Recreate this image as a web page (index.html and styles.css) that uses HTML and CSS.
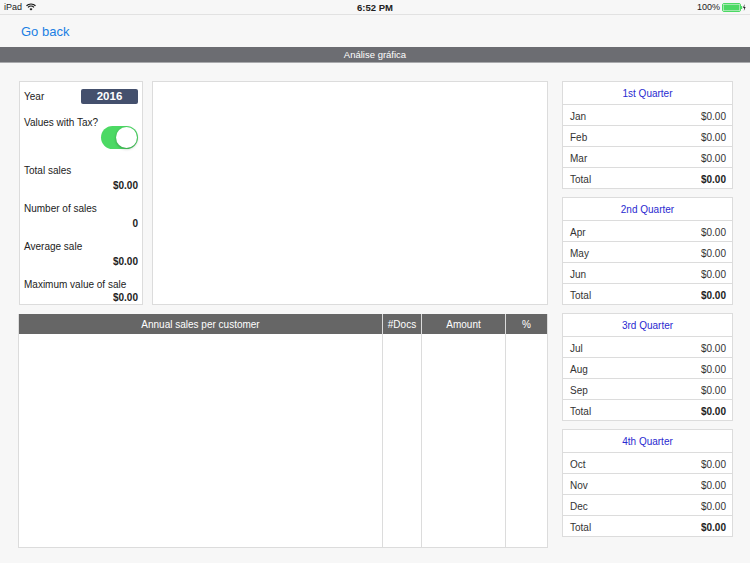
FILE: index.html
```html
<!DOCTYPE html>
<html lang="pt">
<head>
    <meta charset="UTF-8">
    <meta name="viewport" content="width=device-width, initial-scale=1.0">
    <title>Análise gráfica</title>
    <link rel="stylesheet" href="styles.css">
</head>
<body>
    <div class="statusbar">
        <div class="sb-left">
            <span>iPad</span>
            <svg class="wifi" width="10" height="8" viewBox="0 0 10 8">
                <path d="M0.5 2.8 A6.5 6.5 0 0 1 9.5 2.8" fill="none" stroke="#111" stroke-width="1.2"/>
                <path d="M2 4.4 A4.3 4.3 0 0 1 8 4.4" fill="none" stroke="#111" stroke-width="1.2"/>
                <path d="M3.5 6 A2.2 2.2 0 0 1 6.5 6 L5 7.6 Z" fill="#111"/>
            </svg>
        </div>
        <div class="sb-time">6:52 PM</div>
        <div class="sb-right">
            <span>100%</span>
            <svg width="24" height="9" viewBox="0 0 24 9">
                <rect x="0.5" y="0.5" width="18" height="8" rx="1.5" fill="none" stroke="#4cd964"/>
                <rect x="1.5" y="1.5" width="16" height="6" rx="0.8" fill="#4cd964"/>
                <rect x="19" y="3" width="1.2" height="3" fill="#4cd964"/>
                <path d="M22.6 1 L21 4.8 L22.3 4.8 L21.8 8 L23.6 3.9 L22.3 3.9 Z" fill="#111"/>
            </svg>
        </div>
    </div>

    <div class="navbar">
        <a class="back">Go back</a>
    </div>
    <div class="titlebar">Análise gráfica</div>

    <main class="content">
        <div class="left-col">
            <div class="top-row">
                <div class="stats">
                    <div class="year-row">
                        <span>Year</span>
                        <span class="year">2016</span>
                    </div>
                    <div class="label">Values with Tax?</div>
                    <div class="toggle-row">
                        <div class="toggle"><div class="knob"></div></div>
                    </div>
                    <div class="label">Total sales</div>
                    <div class="value">$0.00</div>
                    <div class="label">Number of sales</div>
                    <div class="value">0</div>
                    <div class="label">Average sale</div>
                    <div class="value">$0.00</div>
                    <div class="label">Maximum value of sale</div>
                    <div class="value last">$0.00</div>
                </div>
                <div class="chart"></div>
            </div>

            <div class="sales-table">
                <div class="thead">
                    <div class="c-name">Annual sales per customer</div>
                    <div class="c-docs">#Docs</div>
                    <div class="c-amount">Amount</div>
                    <div class="c-pct">%</div>
                </div>
                <div class="tbody">
                    <div class="c-name"></div>
                    <div class="c-docs"></div>
                    <div class="c-amount"></div>
                    <div class="c-pct"></div>
                </div>
            </div>
        </div>

        <div class="right-col">
            <div class="quarter">
                <div class="q-title">1st Quarter</div>
                <div class="q-row"><span>Jan</span><span>$0.00</span></div>
                <div class="q-row"><span>Feb</span><span>$0.00</span></div>
                <div class="q-row"><span>Mar</span><span>$0.00</span></div>
                <div class="q-row total"><span>Total</span><b>$0.00</b></div>
            </div>
            <div class="quarter">
                <div class="q-title">2nd Quarter</div>
                <div class="q-row"><span>Apr</span><span>$0.00</span></div>
                <div class="q-row"><span>May</span><span>$0.00</span></div>
                <div class="q-row"><span>Jun</span><span>$0.00</span></div>
                <div class="q-row total"><span>Total</span><b>$0.00</b></div>
            </div>
            <div class="quarter">
                <div class="q-title">3rd Quarter</div>
                <div class="q-row"><span>Jul</span><span>$0.00</span></div>
                <div class="q-row"><span>Aug</span><span>$0.00</span></div>
                <div class="q-row"><span>Sep</span><span>$0.00</span></div>
                <div class="q-row total"><span>Total</span><b>$0.00</b></div>
            </div>
            <div class="quarter">
                <div class="q-title">4th Quarter</div>
                <div class="q-row"><span>Oct</span><span>$0.00</span></div>
                <div class="q-row"><span>Nov</span><span>$0.00</span></div>
                <div class="q-row"><span>Dec</span><span>$0.00</span></div>
                <div class="q-row total"><span>Total</span><b>$0.00</b></div>
            </div>
        </div>
    </main>
</body>
</html>
```

FILE: styles.css
```css
* {
    margin: 0;
    padding: 0;
    box-sizing: border-box;
}
body {
    width: 750px;
    height: 563px;
    overflow: hidden;
    background-color: #f7f7f7;
    font-family: "Liberation Sans", Arial, sans-serif;
    color: #222;
}

/* status bar */
.statusbar {
    height: 15px;
    display: flex;
    align-items: center;
    justify-content: space-between;
    padding: 0 4px;
    font-size: 9px;
    border-bottom: 1px solid #e2e2e2;
}
.sb-left,
.sb-right {
    width: 120px;
    display: flex;
    align-items: center;
    gap: 4px;
}
.sb-right {
    justify-content: flex-end;
    gap: 2px;
}
.sb-time {
    font-weight: bold;
    font-size: 9.5px;
}

/* nav */
.navbar {
    height: 32px;
    display: flex;
    align-items: center;
    padding-left: 21px;
}
.back {
    color: #1b7fe3;
    font-size: 13px;
}
.titlebar {
    height: 16px;
    background-color: #6c6d72;
    border-bottom: 1px solid #a9aaad;
    color: #fff;
    font-size: 9.5px;
    text-align: center;
    line-height: 15px;
}

/* main layout */
.content {
    display: flex;
    padding: 18px 0 0 18px;
    gap: 14px;
}
.left-col {
    width: 530px;
}
.top-row {
    display: flex;
    gap: 9px;
    height: 224px;
    padding-left: 1px;
}
.stats {
    width: 124px;
    background: #fff;
    border: 1px solid #dcdcdc;
    padding: 0 4px;
    font-size: 10px;
}
.year-row {
    display: flex;
    justify-content: space-between;
    align-items: center;
    height: 33px;
    padding-bottom: 4px;
}
.year {
    width: 57px;
    height: 15px;
    background-color: #44506d;
    color: #fff;
    font-weight: bold;
    font-size: 11.5px;
    text-align: center;
    line-height: 15px;
    border-radius: 2px;
}
.label {
    line-height: 12px;
    margin-top: 2px;
}
.toggle-row {
    display: flex;
    justify-content: flex-end;
    height: 37px;
    margin-top: -3px;
}
.toggle {
    width: 37px;
    height: 23px;
    border-radius: 12px;
    background-color: #4cd964;
    position: relative;
}
.knob {
    position: absolute;
    right: 1px;
    top: 1px;
    width: 21px;
    height: 21px;
    border-radius: 50%;
    background: #fff;
    box-shadow: 0 1px 3px rgba(0, 0, 0, 0.3);
}
.value {
    text-align: right;
    font-weight: bold;
    line-height: 12px;
    margin-top: 3px;
    height: 21px;
}
.value.last {
    height: auto;
    margin-top: 1px;
}
.chart {
    flex: 1;
    background: #fff;
    border: 1px solid #dcdcdc;
}

/* table */
.sales-table {
    margin-top: 9px;
    height: 234px;
    border: 1px solid #dcdcdc;
    border-top: none;
    background: #fff;
    display: flex;
    flex-direction: column;
}
.thead,
.tbody {
    display: flex;
}
.thead {
    height: 20px;
    background-color: #666;
    color: #fff;
    font-size: 10px;
    line-height: 22px;
    text-align: center;
}
.tbody {
    flex: 1;
}
.c-name {
    width: 363px;
}
.c-docs {
    width: 39px;
    border-left: 1px solid #dcdcdc;
}
.c-amount {
    width: 84px;
    border-left: 1px solid #dcdcdc;
}
.c-pct {
    flex: 1;
    border-left: 1px solid #dcdcdc;
}

/* quarters */
.right-col {
    width: 171px;
    display: flex;
    flex-direction: column;
    gap: 8px;
}
.quarter {
    background: #fff;
    border: 1px solid #dcdcdc;
    font-size: 10px;
}
.q-title {
    height: 22px;
    line-height: 24px;
    text-align: center;
    color: #2a2ad0;
}
.q-row {
    height: 21px;
    border-top: 1px solid #dcdcdc;
    display: flex;
    justify-content: space-between;
    align-items: center;
    padding: 2px 6px 0 7px;
    color: #333;
}
.q-row b {
    color: #222;
}
```
